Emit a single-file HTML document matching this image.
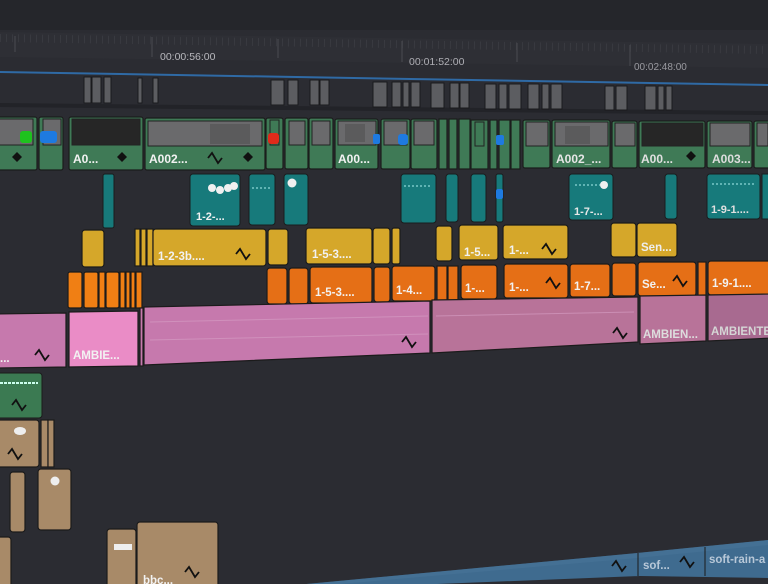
<!DOCTYPE html>
<html><head><meta charset="utf-8"><style>
html,body{margin:0;padding:0;background:#2a2b31;overflow:hidden}
svg{display:block}
text{font-family:"Liberation Sans",sans-serif;font-weight:bold;fill:#f2f2f2}
</style></head><body>
<svg width="768" height="584" viewBox="0 0 768 584" xmlns="http://www.w3.org/2000/svg">
<defs>
<path id="w" d="M0 0 L4 -5 L10 5 L14 0" fill="none" stroke="#111" stroke-width="1.8"/>
<path id="d" d="M0 0 L5 -5 L10 0 L5 5 Z" fill="#111"/>
</defs>
<rect width="768" height="584" fill="#2b2c32"/>
<rect width="768" height="30" fill="#25262b"/>
<!-- ruler -->
<polygon points="0,32 768,44 768,68 0,57" fill="#2e2f35"/>
<g stroke="#4a4b51" stroke-width="1">
<line x1="0" y1="38" x2="768" y2="50" stroke-dasharray="1 5" stroke-width="8" stroke="#393a40"/>
<line x1="15" y1="36" x2="15" y2="52"/><line x1="152" y1="37" x2="152" y2="57"/><line x1="278" y1="39" x2="278" y2="58"/><line x1="402" y1="41" x2="402" y2="62"/><line x1="517" y1="43" x2="517" y2="62"/><line x1="630" y1="45" x2="630" y2="66"/>
</g>
<text x="160" y="60" font-size="10.5" style="fill:#b8b8bd;font-weight:normal">00:00:56:00</text>
<text x="409" y="65" font-size="10.5" style="fill:#aeaeb4;font-weight:normal">00:01:52:00</text>
<text x="634" y="70" font-size="10" style="fill:#9a9aa0;font-weight:normal">00:02:48:00</text>
<line x1="0" y1="72" x2="768" y2="85" stroke="#2f6aa5" stroke-width="2"/>
<!-- markers band -->
<polygon points="0,103 768,111 768,115 0,107" fill="#222328"/>
<g fill="#5c5d61" stroke="#1a1a1d" stroke-width="1">
<rect x="84" y="77" width="7" height="26"/><rect x="92" y="77" width="9" height="26"/><rect x="104" y="77" width="7" height="26"/><rect x="138" y="78" width="4" height="25"/><rect x="153" y="78" width="5" height="25"/>
<rect x="271" y="80" width="13" height="25"/><rect x="288" y="80" width="10" height="25"/><rect x="310" y="80" width="9" height="25"/><rect x="320" y="80" width="9" height="25"/>
<rect x="373" y="82" width="14" height="25"/><rect x="392" y="82" width="9" height="25"/><rect x="403" y="82" width="6" height="25"/><rect x="411" y="82" width="9" height="25"/>
<rect x="431" y="83" width="13" height="25"/><rect x="450" y="83" width="9" height="25"/><rect x="460" y="83" width="9" height="25"/>
<rect x="485" y="84" width="11" height="25"/><rect x="499" y="84" width="8" height="25"/><rect x="509" y="84" width="12" height="25"/><rect x="528" y="84" width="11" height="25"/><rect x="542" y="84" width="7" height="25"/><rect x="551" y="84" width="11" height="25"/>
<rect x="605" y="86" width="9" height="24"/><rect x="616" y="86" width="11" height="24"/><rect x="645" y="86" width="11" height="24"/><rect x="658" y="86" width="6" height="24"/><rect x="666" y="86" width="6" height="24"/>
</g>
<!-- video track -->
<g fill="#3f7a56" stroke="#1b1d1c" stroke-width="1.2">
<rect x="-4" y="117" width="41" height="53" rx="2"/><rect x="39" y="117" width="24" height="53" rx="2"/><rect x="69" y="117" width="74" height="53" rx="2"/><rect x="145" y="118" width="120" height="52" rx="2"/><rect x="266" y="118" width="17" height="51" rx="2"/><rect x="285" y="118" width="23" height="51" rx="2"/><rect x="309" y="118" width="24" height="51" rx="2"/><rect x="335" y="119" width="43" height="50" rx="2"/><rect x="381" y="119" width="29" height="50" rx="2"/><rect x="411" y="119" width="26" height="50" rx="2"/>
<rect x="439" y="119" width="8" height="50"/><rect x="449" y="119" width="8" height="50"/><rect x="459" y="119" width="11" height="50"/><rect x="471" y="120" width="17" height="49"/><rect x="490" y="120" width="7" height="49"/><rect x="499" y="120" width="11" height="49"/><rect x="511" y="120" width="9" height="49"/>
<rect x="523" y="120" width="27" height="48" rx="2"/><rect x="552" y="120" width="58" height="48" rx="2"/><rect x="612" y="121" width="25" height="47" rx="2"/><rect x="639" y="121" width="66" height="47" rx="2"/><rect x="707" y="121" width="45" height="47" rx="2"/><rect x="754" y="121" width="20" height="47" rx="2"/>
</g>
<g fill="#6a6a6c" stroke="#222" stroke-width="1">
<rect x="-2" y="119" width="35" height="26"/><rect x="43" y="119" width="18" height="26"/><rect x="72" y="119" width="68" height="26" fill="#262626"/><rect x="148" y="121" width="114" height="25"/><rect x="270" y="120" width="9" height="25" fill="#3f7a56"/><rect x="289" y="121" width="16" height="24"/><rect x="312" y="121" width="18" height="24"/><rect x="338" y="121" width="38" height="24"/><rect x="384" y="121" width="23" height="24"/><rect x="414" y="121" width="20" height="24"/><rect x="475" y="122" width="9" height="24" fill="#3f7a56"/>
<rect x="526" y="122" width="22" height="24"/><rect x="555" y="122" width="53" height="24"/><rect x="615" y="123" width="20" height="23"/><rect x="642" y="123" width="61" height="23" fill="#262626"/><rect x="710" y="123" width="40" height="23"/><rect x="757" y="123" width="11" height="23"/>
</g>
<g fill="#555" opacity=".7"><rect x="210" y="124" width="40" height="20"/><rect x="345" y="124" width="20" height="18"/><rect x="565" y="126" width="25" height="18"/></g>
<rect x="20" y="131" width="12" height="12" rx="3" fill="#1ec21e"/><rect x="40" y="131" width="17" height="12" rx="3" fill="#1e7ae0"/><rect x="268" y="133" width="11" height="11" rx="3" fill="#e02a1a"/><rect x="373" y="134" width="7" height="10" rx="2" fill="#1e7ae0"/><rect x="398" y="134" width="10" height="11" rx="3" fill="#1e7ae0"/><rect x="496" y="135" width="8" height="10" rx="2" fill="#1e7ae0"/>
<use href="#d" x="12" y="157"/><use href="#d" x="117" y="157"/><use href="#d" x="243" y="157"/><use href="#d" x="686" y="156"/><use href="#w" x="208" y="158"/>
<g font-size="12"><text x="73" y="163">A0...</text><text x="149" y="163">A002...</text><text x="338" y="163">A00...</text><text x="556" y="163" style="fill:#e6e6e6">A002_...</text><text x="641" y="163" style="fill:#e0e0e0">A00...</text><text x="712" y="163" style="fill:#ddd">A003...</text></g>
<!-- teal -->
<g fill="#177a7b" stroke="#1a1c1d" stroke-width="1">
<rect x="103" y="174" width="11" height="54" rx="2"/><rect x="190" y="174" width="50" height="52" rx="3"/><rect x="249" y="174" width="26" height="51" rx="3"/><rect x="284" y="174" width="24" height="51" rx="3"/><rect x="401" y="174" width="35" height="49" rx="3"/><rect x="446" y="174" width="12" height="48" rx="3"/><rect x="471" y="174" width="15" height="48" rx="3"/><rect x="496" y="174" width="7" height="48" rx="2"/><rect x="569" y="174" width="44" height="46" rx="3"/><rect x="665" y="174" width="12" height="45" rx="3"/><rect x="707" y="174" width="53" height="45" rx="3"/><rect x="762" y="174" width="10" height="45"/>
</g>
<g fill="#f0f0f0"><circle cx="212" cy="188" r="4"/><circle cx="220" cy="190" r="4"/><circle cx="228" cy="188" r="4"/><circle cx="234" cy="186" r="4"/><circle cx="292" cy="183" r="4.5"/><circle cx="604" cy="185" r="4"/></g>
<rect x="496" y="189" width="7" height="10" rx="2" fill="#1e7ae0"/>
<g stroke="#aee" stroke-width="1" stroke-dasharray="2 2"><line x1="252" y1="188" x2="272" y2="188"/><line x1="404" y1="186" x2="432" y2="186"/><line x1="575" y1="185" x2="600" y2="185"/><line x1="712" y1="184" x2="755" y2="184"/></g>
<g font-size="11"><text x="196" y="220">1-2-...</text><text x="574" y="215" style="fill:#e8e8e8">1-7-...</text><text x="711" y="213" style="fill:#e0e0e0">1-9-1....</text></g>
<!-- yellow -->
<g fill="#d5a72a" stroke="#1b1b1b" stroke-width="1.2">
<rect x="82" y="230" width="22" height="37" rx="3"/><rect x="135" y="229" width="5" height="37"/><rect x="141" y="229" width="5" height="37"/><rect x="147" y="229" width="6" height="37"/><rect x="153" y="229" width="113" height="37" rx="3"/><rect x="268" y="229" width="20" height="36" rx="3"/><rect x="306" y="228" width="66" height="36" rx="3"/><rect x="373" y="228" width="17" height="36" rx="3"/><rect x="392" y="228" width="8" height="36" rx="2"/><rect x="436" y="226" width="16" height="35" rx="3"/><rect x="459" y="225" width="39" height="35" rx="3"/><rect x="503" y="225" width="65" height="34" rx="3"/><rect x="611" y="223" width="25" height="34" rx="3"/><rect x="637" y="223" width="40" height="34" rx="3"/>
</g>
<use href="#w" x="236" y="254"/><use href="#w" x="542" y="249"/>
<g font-size="11.5"><text x="158" y="260">1-2-3b....</text><text x="312" y="258">1-5-3....</text><text x="464" y="256">1-5...</text><text x="509" y="254">1-...</text><text x="641" y="251" style="fill:#eee">Sen...</text></g>
<!-- orange -->
<g fill="#e56f16" stroke="#1b1b1b" stroke-width="1.2">
<rect x="68" y="272" width="14" height="36" rx="2" fill="#f07f14"/><rect x="84" y="272" width="14" height="36" rx="2" fill="#f07f14"/><rect x="99" y="272" width="6" height="36" fill="#f07f14"/><rect x="106" y="272" width="13" height="36" rx="2" fill="#f07f14"/><rect x="120" y="272" width="5" height="36" fill="#f07f14"/><rect x="126" y="272" width="4" height="36" fill="#f07f14"/><rect x="131" y="272" width="4" height="36" fill="#f07f14"/><rect x="136" y="272" width="6" height="36" fill="#f07f14"/>
<rect x="267" y="268" width="20" height="36" rx="3"/><rect x="289" y="268" width="19" height="36" rx="3"/><rect x="310" y="267" width="62" height="36" rx="3"/><rect x="374" y="267" width="16" height="35" rx="3"/><rect x="392" y="266" width="43" height="35" rx="3"/><rect x="437" y="266" width="10" height="35"/><rect x="448" y="266" width="10" height="35"/><rect x="461" y="265" width="36" height="34" rx="3"/><rect x="504" y="264" width="64" height="34" rx="3"/><rect x="570" y="264" width="40" height="33" rx="3"/><rect x="612" y="263" width="24" height="33" rx="3"/><rect x="638" y="262" width="58" height="34" rx="3"/><rect x="698" y="262" width="8" height="34"/><rect x="708" y="261" width="64" height="34" rx="3"/>
</g>
<use href="#w" x="546" y="283"/><use href="#w" x="673" y="281"/>
<g font-size="11.5"><text x="315" y="296">1-5-3....</text><text x="396" y="294">1-4...</text><text x="465" y="292">1-...</text><text x="509" y="291">1-...</text><text x="574" y="290">1-7...</text><text x="642" y="288">Se...</text><text x="712" y="287">1-9-1....</text></g>
<!-- pink -->
<g stroke="#1b1b1b" stroke-width="1.2">
<polygon points="-4,314 66,313 66,367 -4,368" fill="#c679ad"/>
<polygon points="69,312 138,311 138,366 69,367" fill="#ea8cc6"/>
<rect x="140" y="308" width="3" height="58" fill="#c679ad"/>
<polygon points="144,307 430,301 430,353 144,365" fill="#c679ad"/>
<polygon points="432,300 638,297 638,342 432,353" fill="#b87399"/>
<polygon points="640,296 706,295 706,341 640,344" fill="#b87399"/>
<polygon points="708,295 772,294 772,338 708,341" fill="#a86a90"/>
</g>
<g stroke="#d8a0c6" stroke-width="1" opacity=".6"><line x1="150" y1="322" x2="428" y2="316"/><line x1="150" y1="340" x2="428" y2="334"/><line x1="436" y1="316" x2="634" y2="312"/></g>
<use href="#w" x="35" y="355"/><use href="#w" x="402" y="342"/><use href="#w" x="613" y="333"/>
<g font-size="11.5"><text x="73" y="359">AMBIE...</text><text x="643" y="338" style="fill:#ddd">AMBIEN...</text><text x="711" y="335" style="fill:#d5d5d5">AMBIENTE</text><text x="0" y="362">...</text></g>
<!-- green audio -->
<rect x="-4" y="373" width="46" height="45" rx="3" fill="#3b7a52" stroke="#1b1b1b"/>
<line x1="0" y1="383" x2="38" y2="383" stroke="#cfe" stroke-width="2" stroke-dasharray="3 1"/>
<use href="#w" x="12" y="405"/>
<!-- tan -->
<g fill="#a88a68" stroke="#1b1b1b" stroke-width="1.2">
<rect x="-4" y="420" width="43" height="47" rx="3"/><rect x="41" y="420" width="7" height="47"/><rect x="48" y="420" width="6" height="47"/>
<rect x="10" y="472" width="15" height="60" rx="3"/><rect x="38" y="469" width="33" height="61" rx="3"/>
<rect x="-4" y="537" width="15" height="50" rx="3"/>
<rect x="107" y="529" width="29" height="58" rx="3"/><rect x="137" y="522" width="81" height="65" rx="3"/>
</g>
<g fill="#eee"><ellipse cx="20" cy="431" rx="6" ry="4"/><circle cx="55" cy="481" r="4.5"/></g>
<rect x="114" y="544" width="18" height="6" fill="#eee"/>
<use href="#w" x="8" y="454"/><use href="#w" x="185" y="572"/>
<text x="143" y="584" font-size="11.5">bbc...</text>
<!-- blue bottom -->
<polygon points="285,586 637,553 768,540 768,578 640,576 285,590" fill="#3f6b8f"/>
<polygon points="285,586 637,553 768,540 768,545 637,558 340,584" fill="#4a7599" opacity=".5"/>
<line x1="638" y1="553" x2="638" y2="576" stroke="#1b1b1b"/><line x1="705" y1="547" x2="705" y2="576" stroke="#1b1b1b"/>
<use href="#w" x="612" y="566"/><use href="#w" x="680" y="562"/>
<g font-size="11.5"><text x="643" y="569" style="fill:#b8c8d8">sof...</text><text x="709" y="563" style="fill:#b8c8d8">soft-rain-a</text></g>
</svg>
</body></html>
